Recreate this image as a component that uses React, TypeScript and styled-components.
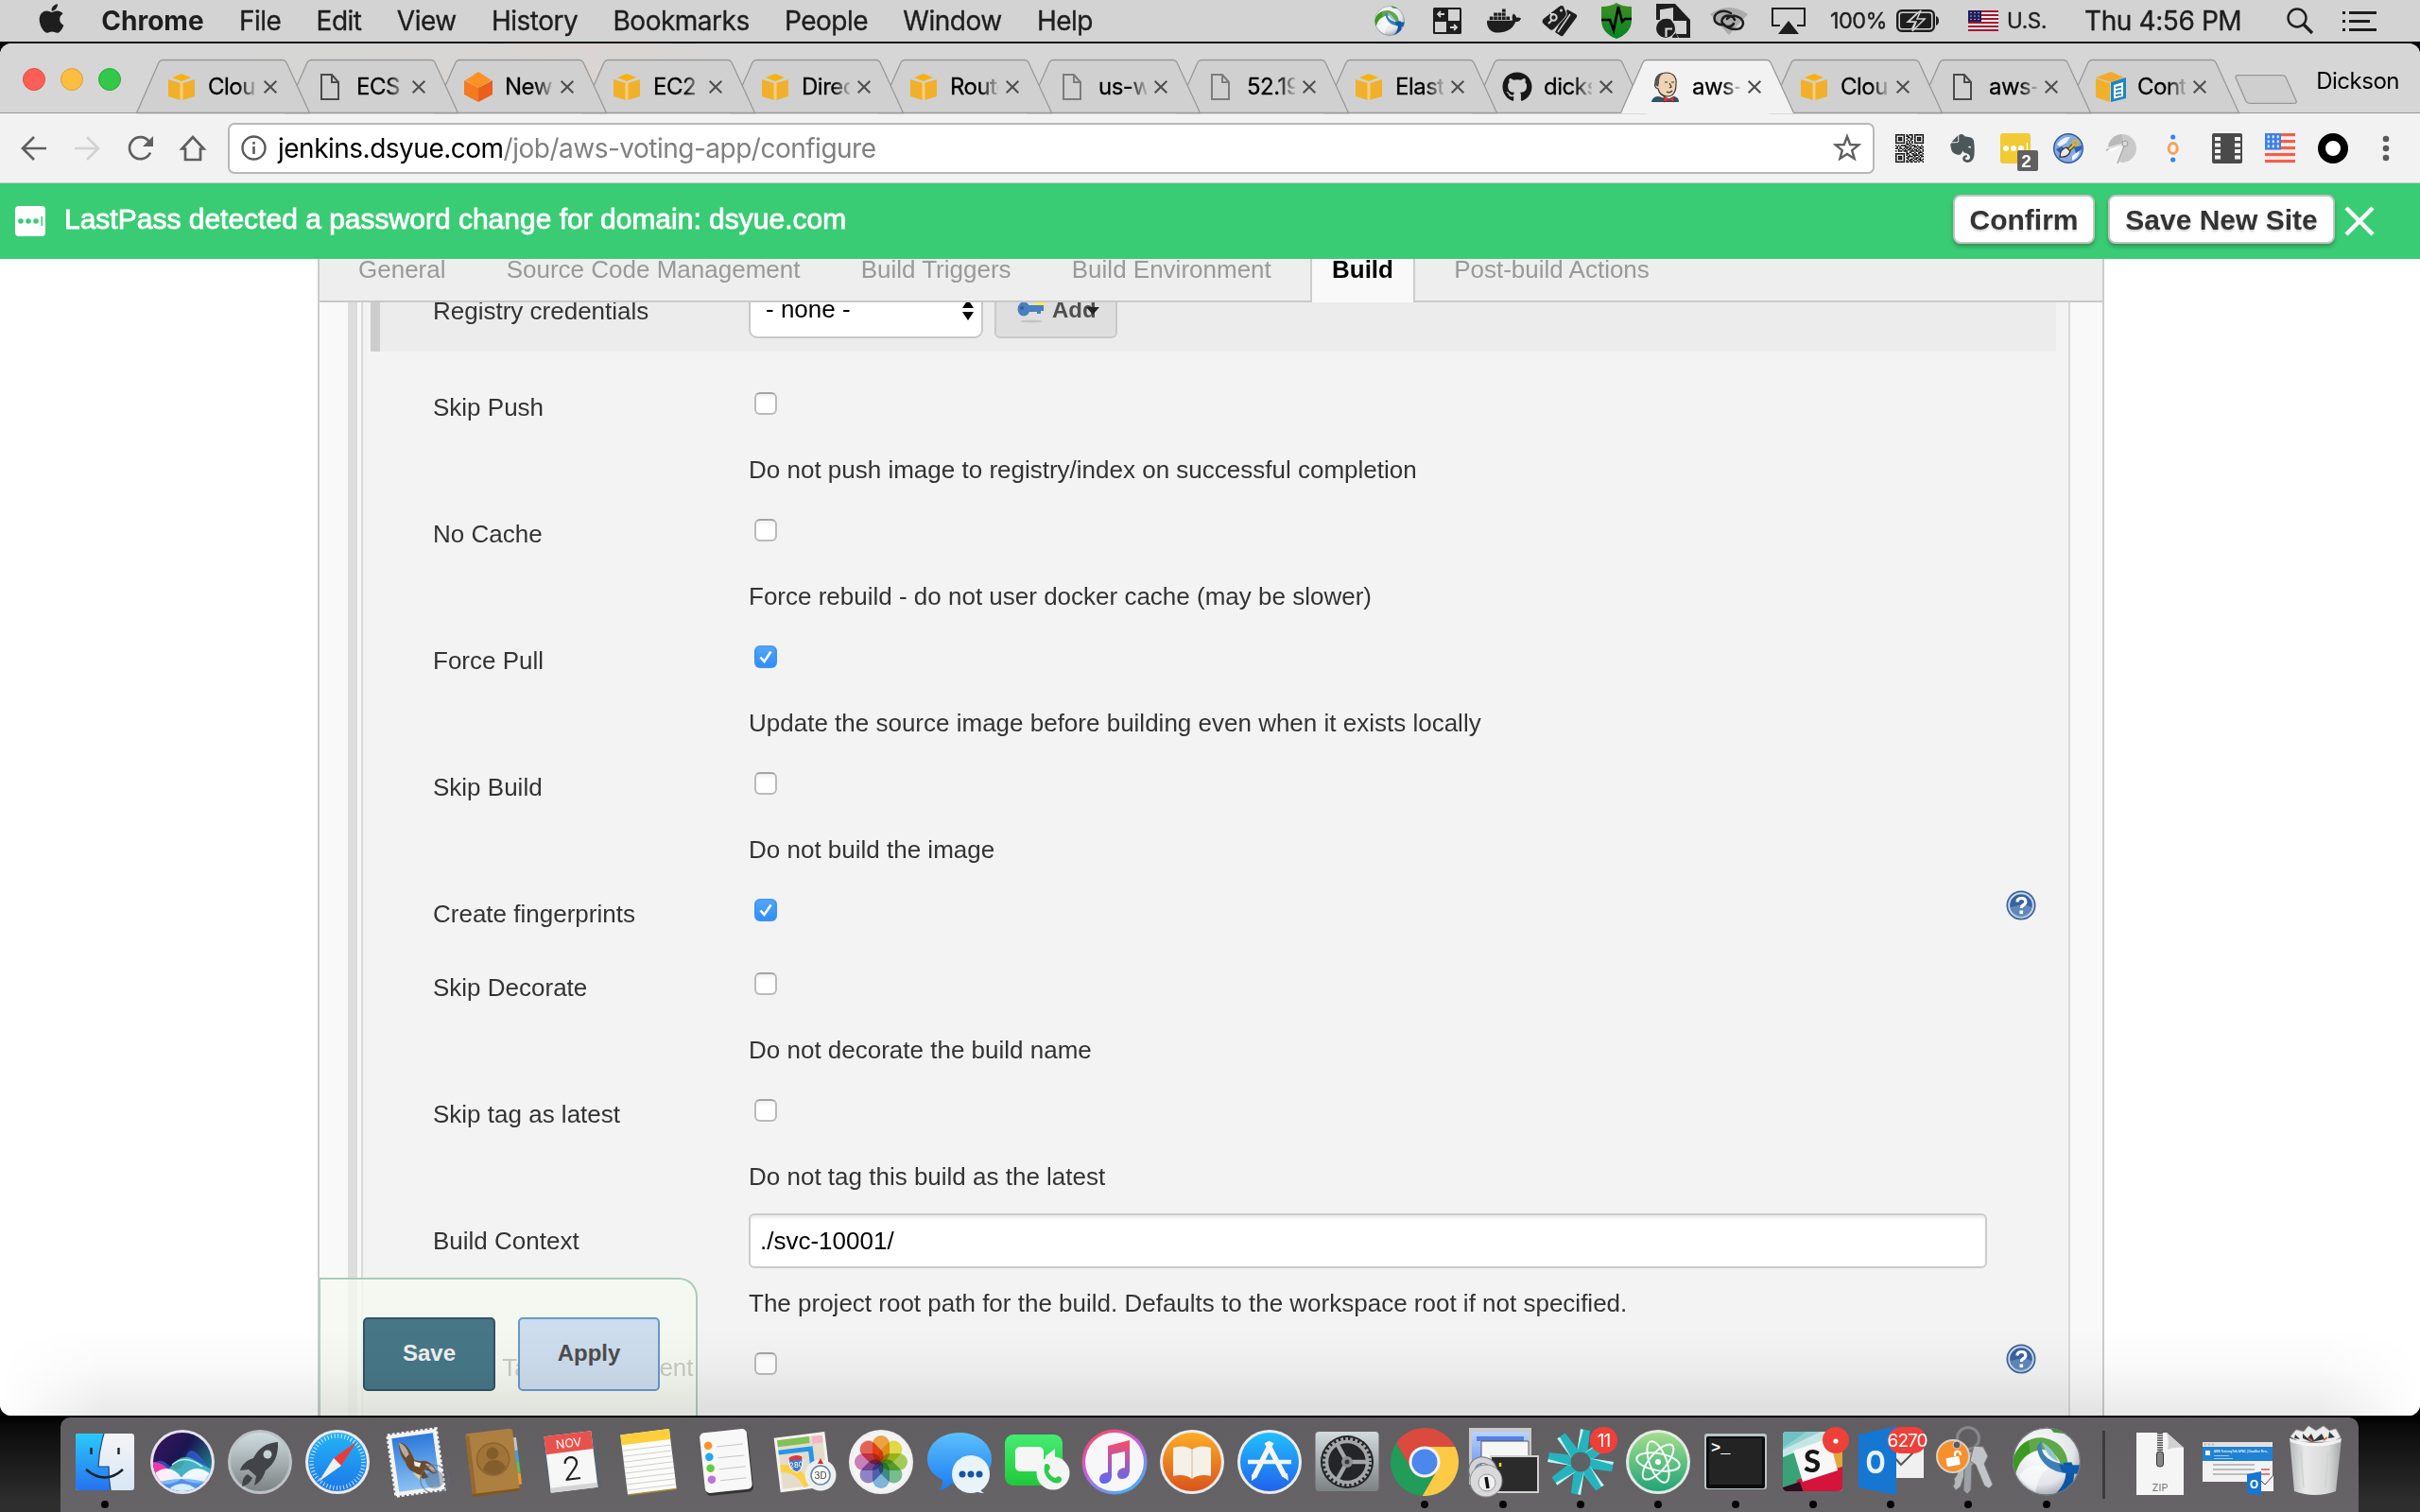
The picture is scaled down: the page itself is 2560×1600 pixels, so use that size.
import React from "react";
import styled, { createGlobalStyle, css } from "styled-components";
import { FaApple, FaDocker, FaGithub, FaEvernote } from "react-icons/fa";

const UI = `Inter, Roboto, "Liberation Sans", sans-serif`;
const WEB = `"Liberation Sans", Arial, sans-serif`;

const Global = createGlobalStyle`
  * { box-sizing: border-box; }
  body { margin: 0; background: #000; }
  svg { display: block; flex: none; overflow: visible; }
`;

const Desktop = styled.div`
  width: 2560px;
  height: 1600px;
  display: flex;
  flex-direction: column;
  overflow: hidden;
  background: #05070b;
  font-family: ${UI};
`;

/* ---------- menu bar ---------- */
const MenuBar = styled.header`
  height: 44px;
  margin-bottom: 2px;
  flex: none;
  display: flex;
  align-items: center;
  justify-content: space-between;
  padding: 0 46px 0 39px;
  background: #d3d3d3;
  color: #1e1e1e;
`;
const MenuGroup = styled.div`
  display: flex;
  align-items: center;
  gap: 37.3px;
`;
const AppleMark = styled.span`
  width: 31px;
  margin-top: -5px;
  display: flex;
  justify-content: center;
`;
const MenuItem = styled.span<{ $bold?: boolean }>`
  font-size: 28px;
  line-height: 44px;
  font-weight: ${(p) => (p.$bold ? 700 : 400)};
  letter-spacing: ${(p) => (p.$bold ? 0 : -0.5)}px;
  -webkit-text-stroke: ${(p) => (p.$bold ? 0 : 0.35)}px #1e1e1e;
  white-space: nowrap;
`;
const StatusGroup = styled.div`
  display: flex;
  align-items: center;
`;
const StatusIcon = styled.span<{ $ml?: number }>`
  margin-left: ${(p) => p.$ml || 0}px;
  display: flex;
`;
const StatusText = styled.span<{ $w: number; $ml: number; $size: number; $ls: number }>`
  width: ${(p) => p.$w}px;
  margin-left: ${(p) => p.$ml}px;
  font-size: ${(p) => p.$size}px;
  letter-spacing: ${(p) => p.$ls}px;
  line-height: 44px;
  white-space: nowrap;
  -webkit-text-stroke: 0.35px #1e1e1e;
`;

/* ---------- browser window ---------- */
const Window = styled.section`
  height: 1452px;
  flex: none;
  display: flex;
  flex-direction: column;
  border-radius: 12px;
  overflow: hidden;
  background: #fff;
  position: relative;
`;
const DockShade = styled.div`
  position: absolute;
  left: 0;
  right: 0;
  bottom: 0;
  height: 90px;
  pointer-events: none;
  z-index: 40;
  background: linear-gradient(rgba(0, 0, 0, 0), rgba(0, 0, 0, 0.025) 45%, rgba(0, 0, 0, 0.085));
  mask-image: linear-gradient(90deg, transparent, #000 110px, #000 2450px, transparent);
`;
const TabStrip = styled.div`
  height: 74px;
  flex: none;
  display: flex;
  align-items: flex-end;
  background: linear-gradient(90deg, #d6d6d6 0, #d7d6d5 500px, #dad5d2 620px, #d6d6d6 780px, #d6d6d6);
  position: relative;
  box-shadow: inset 0 -1px #989898;
`;
const Lights = styled.div`
  width: 144px;
  height: 74px;
  display: flex;
  align-items: center;
  gap: 16px;
  padding: 2px 0 0 24px;
  flex: none;
`;
const Light = styled.i<{ $c: string; $b: string }>`
  width: 24px;
  height: 24px;
  border-radius: 50%;
  background: ${(p) => p.$c};
  border: 1px solid ${(p) => p.$b};
`;
const TabBox = styled.div<{ $z: number }>`
  width: 184px;
  height: 57px;
  margin-right: -27px;
  flex: none;
  position: relative;
  z-index: ${(p) => p.$z};
  display: flex;
  align-items: center;
  padding: 1px 0 0 32px;
`;
const TabShape = styled.svg`
  position: absolute;
  inset: 0;
`;
const TabIcon = styled.span`
  width: 32px;
  height: 32px;
  display: flex;
  align-items: center;
  justify-content: center;
  position: relative;
`;
const TabTitle = styled.span`
  width: 51px;
  margin: 0 8px 0 12px;
  overflow: hidden;
  position: relative;
  white-space: nowrap;
  font-size: 24px;
  letter-spacing: -0.5px;
  line-height: 34px;
  color: #000;
  -webkit-text-stroke: 0.3px #000;
  mask-image: linear-gradient(90deg, #000 32px, transparent 54px);
`;
const Close = styled.svg`
  position: relative;
`;
const NewTab = styled.svg`
  margin: 0 0 10px 22px;
`;
const Profile = styled.span`
  margin: 0 0 19px auto;
  padding-right: 22px;
  font-size: 24px;
  letter-spacing: -0.5px;
  line-height: 30px;
  color: #000;
`;

const Toolbar = styled.div`
  height: 74px;
  flex: none;
  display: flex;
  align-items: center;
  padding-left: 22px;
  background: #f2f2f2;
  border-bottom: 1px solid #c9ccc9;
`;
const NavIcons = styled.div`
  display: flex;
  gap: 28px;
  width: 219px;
`;
const Omnibox = styled.div`
  width: 1742px;
  height: 54px;
  border: 2px solid #b7b7b7;
  border-radius: 7px;
  background: #fff;
  display: flex;
  align-items: center;
  padding: 0 12px 0 12px;
  flex: none;
`;
const Url = styled.div`
  flex: 1;
  margin-left: 12px;
  font-size: 28px;
  letter-spacing: -0.5px;
  line-height: 50px;
  color: #808080;
  b { font-weight: 400; color: #000; }
`;
const Extensions = styled.div`
  margin-left: 21px;
  display: flex;
  align-items: center;
  gap: 24px;
`;

/* ---------- notification banner ---------- */
const Banner = styled.div`
  height: 80px;
  flex: none;
  display: flex;
  align-items: center;
  padding: 0 48px 0 16px;
  background: #3acc74;
  font-family: ${WEB};
`;
const BannerText = styled.span`
  margin-left: 20px;
  flex: 1;
  font-size: 30px;
  line-height: 40px;
  color: #fff;
  padding-bottom: 4px;
  -webkit-text-stroke: 0.8px #fff;
`;
const BannerButton = styled.button<{ $w: number }>`
  width: ${(p) => p.$w}px;
  height: 52px;
  margin: -4px 14px 0 0;
  padding: 2px 0 0;
  border: 2px solid #c4c4c4;
  border-radius: 8px;
  background: #fff;
  box-shadow: 0 3px 4px rgba(0, 0, 0, 0.25);
  font: bold 30px ${WEB};
  color: #333;
  text-shadow: 0 2px 2px rgba(0, 0, 0, 0.18);
`;

/* ---------- configuration page ---------- */
const Page = styled.main`
  flex: 1;
  min-height: 0;
  display: flex;
  justify-content: center;
  font-family: ${WEB};
  font-size: 26px;
  color: #333;
  background: #fff;
`;
const Config = styled.div`
  width: 1890px;
  margin-right: -2px;
  border: solid #ccc;
  border-width: 0 2px;
  background: #f9f9f9;
  display: flex;
  flex-direction: column;
  position: relative;
`;
const ConfigTabs = styled.nav`
  height: 46px;
  flex: none;
  display: flex;
  gap: 18.2px;
  padding-left: 18px;
  background: #eee;
  box-shadow: inset 0 -2px #c9c9c9;
`;
const ConfigTab = styled.a<{ $on?: boolean }>`
  height: 46px;
  padding: 0 21px;
  border: solid transparent;
  border-width: 0 2px;
  line-height: 23px;
  white-space: nowrap;
  color: #999;
  ${(p) =>
    p.$on &&
    css`
      font-weight: bold;
      color: #000;
      background: #f9f9f9;
      border-color: #ccc;
    `}
`;
const Body = styled.div`
  flex: 1;
  min-height: 0;
  overflow: hidden;
  display: flex;
  padding: 0 34px 0 30px;
`;
const DragBar = styled.div`
  width: 10px;
  margin-right: 4px;
  background: #ddd;
`;
const Step = styled.div`
  flex: 1;
  border: solid #d9d9d9;
  border-width: 0 2px;
  background: #f3f3f3;
`;
const Registry = styled.div`
  height: 52px;
  margin: 0 13px 26px 8px;
  border-left: 10px solid #cdcdcd;
  background: #ececec;
  overflow: hidden;
  display: flex;
  align-items: flex-end;
  padding: 0 0 14px 56px;
`;
const RegistryLabel = styled.span`
  width: 334px;
  line-height: 58px;
`;
const Select = styled.div`
  width: 248px;
  height: 62px;
  margin-right: 12px;
  border: 2px solid #c8c8c8;
  border-radius: 9px;
  background: #fff;
  color: #000;
  display: flex;
  align-items: center;
  justify-content: space-between;
  padding: 1px 8px 0 16px;
`;
const AddButton = styled.div`
  width: 130px;
  height: 62px;
  border: 2px solid #c9c9c9;
  border-radius: 6px;
  background: #dfdfdf;
  display: flex;
  align-items: center;
  gap: 8px;
  padding: 2px 0 0 22px;
  font-size: 24px;
  font-weight: bold;
  color: #505050;
  position: relative;
`;
const Caret = styled.svg`
  position: absolute;
  left: 95px;
  top: 27px;
`;
const Field = styled.div<{ $short?: boolean }>`
  height: ${(p) => (p.$short ? 78 : 134)}px;
  padding: 0 34px 0 74px;
  display: grid;
  grid-template-columns: 334px 1fr auto;
  grid-template-rows: 66px 66px;
  align-items: center;
`;
const Description = styled.div`
  grid-column: 2 / 4;
  white-space: nowrap;
`;
const Check = styled.span<{ $on?: boolean }>`
  display: flex;
  width: 24px;
  height: 24px;
  margin: 0 0 8px 6px;
  border-radius: 6px;
  border: 2px solid ${(p) => (p.$on ? "#3b93f0" : "#bababa")};
  border-top-color: ${(p) => (p.$on ? "#4a9cf2" : "#a4a4a4")};
  background: ${(p) => (p.$on ? "linear-gradient(#52a6f8, #2f8ef7)" : "linear-gradient(#f1f1f1, #fff 30%)")};
`;
const TextInput = styled.div`
  width: 1310px;
  height: 58px;
  border: 2px solid #ccc;
  border-radius: 6px;
  background: #fff;
  box-shadow: inset 0 3px 3px rgba(0, 0, 0, 0.07);
  color: #000;
  line-height: 54px;
  padding-left: 10px;
`;
const Help = styled.span`
  padding-bottom: 18px;
  grid-column: 3;
`;
const SaveBar = styled.div`
  position: absolute;
  left: 0;
  bottom: 0;
  width: 400px;
  height: 146px;
  border: solid #a8ccba;
  border-width: 2px 2px 0 1px;
  border-top-right-radius: 20px;
  background: rgba(246, 250, 240, 0.76);
  display: flex;
  gap: 24px;
  padding: 40px 0 0 45px;
`;
const Action = styled.button<{ $primary?: boolean }>`
  width: ${(p) => (p.$primary ? 140 : 150)}px;
  height: 78px;
  padding: 0 0 2px;
  border-radius: 5px;
  border: 2px solid ${(p) => (p.$primary ? "#30546a" : "#6699cc")};
  background: ${(p) => (p.$primary ? "#477787" : "#cddded")};
  color: ${(p) => (p.$primary ? "#f0f0f0" : "#4d4d4d")};
  font: bold 24px ${WEB};
`;

/* ---------- dock ---------- */
const DockArea = styled.footer`
  height: 102px;
  padding: 2px 65px 0 64px;
  background: linear-gradient(#000, #0a0a0b 10%, #2e2e2f 90%);
`;
const Dock = styled.div`
  height: 100px;
  border-radius: 10px 10px 0 0;
  background: linear-gradient(#615e61, #676467);
  display: flex;
  padding-left: 6px;
`;
const DockCell = styled.div`
  width: 82.15px;
  height: 100px;
  flex: none;
`;
const Divider = styled.div`
  width: 3px;
  height: 72px;
  margin: 14px 17px 0 18px;
  background: #3d3b3e;
`;

/* ---------- small glyphs ---------- */
const Box3D = () => (
  <svg width="28" height="28" viewBox="0 0 28 28">
    <path d="M4 4L14 0l10 4-10 4z" fill="#f9b20b" />
    <path d="M0 6l13 4v18L0 24zM28 6l-13 4v18l13-4z" fill="#f1b02b" />
    <path d="M12.5 10h3v17h-3z" fill="#f6cf80" />
  </svg>
);
const Cube = () => (
  <svg width="30" height="32" viewBox="0 0 30 32">
    <path d="M15 0l14 9-14 8L1 9z" fill="#fb9324" />
    <path d="M0 9l15 8v15L0 24z" fill="#f27a21" />
    <path d="M30 9l-15 8v15l15-8z" fill="#ea5f1e" />
  </svg>
);
const Doc = ({ c = "#4b4b4b" }: { c?: string }) => (
  <svg width="20" height="28" viewBox="0 0 20 28" fill="none" stroke={c} strokeWidth="2">
    <path d="M1 1h11l7 8v18H1zM12 1v8h7" />
  </svg>
);
const Butler = () => (
  <svg width="30" height="32" viewBox="0 0 30 32">
    <path d="M0 32c1-5 4-6 8-6l9 3 7-3c4 1 5 3 5 6z" fill="#2f5266" />
    <path d="M4 12C4 4 9 1 16 1s11 5 10 12c0 8-3 13-9 13-6 0-9-4-10-8-3-1-4-3-3-6z" fill="#efd3b4" stroke="#3a3330" strokeWidth="1.2" />
    <path d="M4 14C3 5 8 1 15 1 9 3 8 6 8 12l-1 4z" fill="#555" />
    <path d="M14 11h3M21 11h3M19 12l2 4-2 1M16 21q3 2 6-1" stroke="#3a3330" strokeWidth="1.2" fill="none" />
    <path d="M13 26l6 3 5-3v6l-5-2-6 2z" fill="#d33a3a" stroke="#7d1d1d" strokeWidth=".6" />
  </svg>
);
const BoxPage = () => (
  <svg width="32" height="32" viewBox="0 0 32 32">
    <path d="M0 6L16 0l14 6-14 5z" fill="#f3a92b" />
    <path d="M0 7l15 5v20L0 27z" fill="#f1b02b" />
    <path d="M16 11l16-5v22l-16 4z" fill="#1f85c2" />
    <path d="M19 14l10-3v15l-10 2.500z" fill="#fff" />
    <path d="M21 17l6-1.500M21 21l6-1.300M21 25l6-1" stroke="#1f85c2" strokeWidth="2" />
  </svg>
);
const FlagUS = ({ w, h, soft }: { w: number; h: number; soft?: boolean }) => (
  <svg width={w} height={h} viewBox="0 0 32 22" preserveAspectRatio="none">
    <rect width="32" height="22" fill={soft ? "#fbeeee" : "#f0f0f2"} />
    {[0, 1, 2, 3, 4, 5].map((i) =>
      soft && i > 4 ? null : (
        <rect key={i} y={soft ? i * 4.8 : i * 4} width="32" height={soft ? 2.2 : 2} fill={soft ? "#f0604c" : "#a8142c"} />
      ),
    )}
    <rect width={soft ? 17 : 14} height="12" fill={soft ? "#3f7fe8" : "#1d1d58"} />
    {[2.5, 6, 9.5].map((y) =>
      [3, 7, 11].map((x) => <circle key={x + "-" + y} cx={soft ? x * 1.25 : x} cy={y} r={soft ? 1.2 : 0.7} fill="#dfe6fa" />),
    )}
  </svg>
);
const Sphere = ({ id }: { id: string }) => (
  <g>
    <clipPath id={id}><circle cx="50" cy="50" r="49" /></clipPath>
    <radialGradient id={id + "g"} cx=".4" cy=".35" r=".75">
      <stop offset="0" stopColor="#fff" />
      <stop offset=".65" stopColor="#e2e5e9" />
      <stop offset="1" stopColor="#858c95" />
    </radialGradient>
    <g clipPath={`url(#${id})`}>
      <rect width="100" height="100" fill={`url(#${id}g)`} />
      <path d="M54 0h20l4 10-18-2z" fill="#3f9a2c" />
      <path d="M0 50C8 24 28 13 47 16c22 4 33 20 34 38l-10 2C68 44 58 34 45 33 28 34 12 44 5 68z" fill="#5fa848" />
      <path d="M0 50C6 32 14 24 24 20l2 18C16 42 9 52 5 68z" fill="#3b9a20" />
      <path d="M43 20c-4 22 12 36 57 35v12C62 72 38 54 36 28z" fill="#3f7fb8" />
      <path d="M43 22q16 8 24 28-16-5-24-28z" fill="#8fc4cf" />
      <path d="M74 52c8 14 4 32-14 48h17c14-16 16-36 9-49z" fill="#0d56a6" />
      <path d="M68 54q14 3 32 1v12q-14 2-28-2z" fill="#0f5cae" />
      <path d="M10 70q16-22 44-10-14 4-20 34-16-8-24-24z" fill="#fff" opacity=".55" />
    </g>
    <circle cx="50" cy="50" r="48.500" fill="none" stroke="#70767d" strokeWidth="1.500" />
  </g>
);

const QR_ROWS = [
  "111111101011101111111",
  "100000101100101000001",
  "101110100110101011101",
  "101110101001101011101",
  "101110100101001011101",
  "100000101010101000001",
  "111111101010101111111",
  "000000001101000000000",
  "101011110010111010010",
  "010100011101001101101",
  "110110101011010010110",
  "001001010110101101001",
  "101110111001110110101",
  "000000001011001001110",
  "111111101100110101001",
  "100000101010011110110",
  "101110100111101001011",
  "101110101100010110100",
  "101110100101101101101",
  "100000101011010010110",
  "111111101101101101001",
];
const QR = () => (
  <svg width="32" height="32" viewBox="-.700 -.700 22.400 22.400" shapeRendering="geometricPrecision">
    <rect x="-.7" y="-.7" width="22.4" height="22.4" fill="#fff" />
    {QR_ROWS.map((r, y) => r.split("").map((c, x) => (c === "1" ? <rect key={x + "." + y} x={x} y={y} width="1.080" height="1.080" fill="#000" /> : null)))}
  </svg>
);
const PassExt = () => (
  <svg width="32" height="32" viewBox="0 0 32 32">
    <rect width="32" height="32" rx="3" fill="#f2ca33" />
    <circle cx="6" cy="16" r="3" fill="#fff" /><circle cx="14" cy="16" r="3" fill="#fff" /><circle cx="22" cy="16" r="3" fill="#fff" />
    <path d="M28.500 10v10" stroke="#fff" strokeWidth="1.300" />
    <rect x="18" y="18" width="22" height="22" rx="2" fill="#606060" />
    <text x="27.500" y="36" textAnchor="middle" fontFamily="Liberation Sans, sans-serif" fontWeight="700" fontSize="19" fill="#fff">2</text>
  </svg>
);
const Digger = () => (
  <svg width="32" height="32" viewBox="0 0 32 32">
    <circle cx="16" cy="16" r="15.300" fill="#86a9df" stroke="#2c58a8" strokeWidth="1.400" />
    <path d="M4 12q6-9 14-8l-4 6-7 4zM20 24l8-6q-1 8-8 11z" fill="#eef4fd" />
    <path d="M3 17l6-3 3 2-5 5z" fill="#2f5fb4" /><path d="M22 15l8-2v4l-6 4z" fill="#2f5fb4" />
    <path d="M15 19l8-8" stroke="#4d3f0a" strokeWidth="4.500" /><path d="M15 19l8-8" stroke="#e8c638" strokeWidth="2.200" />
    <circle cx="23.500" cy="10" r="2.800" fill="none" stroke="#d9b52a" strokeWidth="2" />
    <path d="M7 25q0-8 7-10l4 4q-2 7-11 6z" fill="#e9e9e9" stroke="#333" strokeWidth="1.300" />
  </svg>
);
const Dish = () => (
  <svg width="32" height="32" viewBox="0 0 32 32">
    <path d="M2 15A15 15 0 0 1 17 1l2 9z" fill="#bababa" />
    <path d="M17 1a15 15 0 0 1 0 30l-3-1 6-18z" fill="#c9c9c9" />
    <path d="M0 18l20-7-8 21" fill="none" stroke="#a9a9a9" strokeWidth="1.500" />
    <path d="M2 17l17-6-14 9z" fill="#fff" />
    <circle cx="20" cy="11" r="3" fill="#d8d8d8" stroke="#999" />
  </svg>
);
const Dots3 = () => (
  <svg width="32" height="32" viewBox="0 0 32 32">
    <circle cx="14.700" cy="4" r="2.600" fill="#2f86f6" /><circle cx="14.700" cy="28" r="2.600" fill="#2f86f6" />
    <ellipse cx="14.700" cy="16" rx="4.500" ry="5.500" fill="none" stroke="#f5a15c" strokeWidth="3" />
  </svg>
);
const Film = () => (
  <svg width="32" height="32" viewBox="0 0 32 32">
    <rect width="32" height="32" rx="2" fill="#4a4a4a" />
    {[4, 10.5, 17, 23.5].map((y) => (
      <g key={y} fill="#f4f4f4"><rect x="3" y={y} width="6" height="4" /><rect x="24" y={y} width="6" height="4" /></g>
    ))}
  </svg>
);
const HelpIcon = () => (
  <svg width="32" height="32" viewBox="0 0 32 32">
    <circle cx="16" cy="16" r="15.500" fill="#3a62a0" />
    <circle cx="16" cy="16" r="12.800" fill="#38639f" stroke="#ccd9e8" strokeWidth="2" />
    <path d="M5 18a11 11 0 0 0 22 0q-8-5-22 0z" fill="#7fa6d2" opacity=".55" />
    <path d="M11.800 12.500q.5-4 4.700-4 4.300 0 4.300 3.700 0 2.300-2.800 3.800-1.700 1-1.700 3" fill="none" stroke="#fff" strokeWidth="3.200" />
    <rect x="14.500" y="21.500" width="3.600" height="3.600" fill="#fff" />
  </svg>
);

/* ---------- dock drawings, one 82×100 tile each ---------- */
const Disc = ({ fill, rim = "#ececee" }: { fill: string; rim?: string }) => (
  <>
    <circle cx="41" cy="47" r="34" fill={rim} />
    <circle cx="41" cy="47" r="31" fill={fill} />
  </>
);
const Grad = ({ id, a, b }: { id: string; a: string; b: string }) => (
  <linearGradient id={id} x1="0" y1="0" x2="0" y2="1"><stop offset="0" stopColor={a} /><stop offset="1" stopColor={b} /></linearGradient>
);
const BadgeRed = ({ x, w, t }: { x: number; w: number; t: string }) => (
  <>
    <rect x={x} y="10" width={w} height="28" rx="14" fill="#ee4038" />
    {t === "•" ? (
      <circle cx={x + w / 2} cy="25" r="2.600" fill="#fff" />
    ) : (
      <text x={x + w / 2} y="31" textAnchor="middle" fontSize="19" fontFamily="Inter, sans-serif" fill="#fff" letterSpacing="-1">{t}</text>
    )}
  </>
);

const ART: Record<string, React.ReactNode> = {
  finder: (
    <>
      <Grad id="fa" a="#2bc9fb" b="#2672ee" /><Grad id="fb" a="#f4f4f5" b="#d9e6f6" />
      <rect x="10" y="17" width="62" height="60" rx="3" fill="url(#fb)" />
      <path d="M13 17h27q-5 16-6 35h11q0 13 2 25H13q-3 0-3-3V20q0-3 3-3z" fill="url(#fa)" />
      <path d="M40 17q-5 16-6 35h11q0 13 2 25" fill="none" stroke="#1d4a74" strokeWidth="1.200" />
      <path d="M26.500 32v7M55.500 32v7" stroke="#16222e" strokeWidth="2.400" />
      <path d="M21 55q20 17 39 0" fill="none" stroke="#16222e" strokeWidth="2.400" />
    </>
  ),
  siri: (
    <>
      <linearGradient id="si" x1="0" y1="0" x2="1" y2=".7"><stop offset="0" stopColor="#3a1560" /><stop offset=".5" stopColor="#1c1550" /><stop offset="1" stopColor="#1f8a90" /></linearGradient>
      <Disc fill="url(#si)" rim="#e6e2ee" />
      <clipPath id="sic"><circle cx="41" cy="47" r="31" /></clipPath>
      <g clipPath="url(#sic)">
        <path d="M4 60q8-22 22-10t18-6 18 0 14 14v30H4z" fill="#2f5ed8" opacity=".75" />
        <path d="M8 47q16 0 24 17-12 8-24 2z" fill="#ee3aa6" />
        <path d="M26 56q12-20 26-12t22 12q-10 10-24 8t-24-8z" fill="#52d8c8" opacity=".7" />
        <path d="M30 50q14-12 32 2" stroke="#b6f4f6" strokeWidth="1.500" fill="none" />
        <path d="M8 63q16-18 32 0 16-18 34 0-14 12-34 2-18 12-32-2z" fill="#fff" opacity=".92" />
        <path d="M10 70q31-10 62 0v12H10z" fill="#5aa6f8" opacity=".75" />
        <path d="M26 76q15-12 30 0-14 6-30 0z" fill="#d6ecff" />
      </g>
    </>
  ),
  rocket: (
    <>
      <Grad id="ro" a="#cfdde1" b="#7e8384" />
      <Disc fill="url(#ro)" rim="#bcc3c6" />
      <path d="M60 26q-18 1-26 17l-5 2q-7 4-9 11l9-1 8 7-2 10q7-4 10-11l2-5q14-10 13-30z" fill="#414549" />
      <circle cx="49" cy="39" r="4.500" fill="#c9d3d6" /><path d="M28 60q-6 3-6 13 8-2 11-9z" fill="#414549" />
    </>
  ),
  safari: (
    <>
      <Grad id="sa" a="#22b4f5" b="#1e77ea" />
      <Disc fill="url(#sa)" />
      <circle cx="41" cy="47" r="27.500" fill="none" stroke="#cfeafe" strokeWidth="4.500" strokeDasharray="1 2.600" />
      <path d="M61 26L45 51l-8-8z" fill="#ee3a36" /><path d="M21 68l16-25 8 8z" fill="#f1f1f3" />
    </>
  ),
  mail: (
    <g transform="rotate(-8 41 47)">
      <Grad id="ml" a="#2d79dc" b="#8cc2f0" />
      <rect x="15" y="15" width="52" height="65" fill="#f4f4f4" stroke="#f4f4f4" strokeWidth="3" strokeDasharray="3 2" />
      <rect x="19" y="19" width="44" height="57" fill="url(#ml)" />
      <path d="M26 24q8 2 11 12l3 9 6 2q10-2 16 14l-5 1q-6-6-9-5l4 8-6 1-7-8q-8-3-9-12-6-10-4-22z" fill="#6b4a2b" />
      <path d="M26 24q7 4 9 14l-4 3q-5-8-5-17zM50 50q8 1 11 11l-4-1q-4-6-7-10z" fill="#b9aa97" /><path d="M39 46l7 3-2 4-5-2z" fill="#f0ece2" /><path d="M36 58l6 8 3-4z" fill="#e2cf9c" />
      <circle cx="58" cy="68" r="15" fill="none" stroke="#5f6d80" strokeWidth="1.500" opacity=".6" /><circle cx="58" cy="68" r="10" fill="#4f6078" opacity=".4" />
    </g>
  ),
  contacts: (
    <g transform="rotate(-7 41 47)">
      <path d="M64 24h4v14h-4z" fill="#c4c4c6" /><path d="M64 38h4v12h-4z" fill="#3ba3e0" /><path d="M64 50h4v12h-4z" fill="#5ac052" /><path d="M64 62h4v12h-4z" fill="#f29a2a" />
      <rect x="15" y="14" width="50" height="66" rx="3" fill="#ad7f40" /><path d="M15 16h4v63h-4z" fill="#96692f" />
      <circle cx="41" cy="44" r="17" fill="#a27438" stroke="#8a6430" strokeWidth="1.500" /><circle cx="41" cy="38" r="6.500" fill="#835d2b" /><path d="M29 54q3-9 12-9t12 9q-5 6-12 6t-12-6z" fill="#835d2b" />
      <path d="M15 78h50v3H15z" fill="#80571f" />
    </g>
  ),
  calendar: (
    <g transform="rotate(-7 41 47)">
      <path d="M14 22h56v54H14z" fill="#59646c" />
      <rect x="16" y="17" width="50" height="60" fill="#f7f7f7" /><rect x="16" y="17" width="50" height="19" fill="#e8524d" />
      <text x="41" y="31.500" textAnchor="middle" fontSize="12.500" fontFamily="Inter, sans-serif" fill="#fff">NOV</text>
      <text x="41" y="66" textAnchor="middle" fontSize="34" fontWeight="300" fontFamily="Inter, sans-serif" fill="#222">2</text>
      <path d="M16 72h50v5H16z" fill="#d4d4d4" />
    </g>
  ),
  notes: (
    <g transform="rotate(-7 41 47)">
      <rect x="15" y="15" width="52" height="64" fill="#fcfcfa" /><rect x="15" y="15" width="52" height="11" fill="#fdcf3b" />
      {[32, 38, 44, 50, 56, 62, 68, 74].map((y) => <path key={y} d={`M15 ${y}h52`} stroke="#cfcfcd" />)}
      <path d="M15 79h52" stroke="#a88a2c" strokeWidth="1.500" />
    </g>
  ),
  reminders: (
    <g transform="rotate(-6 41 47)">
      <rect x="17" y="17" width="50" height="64" rx="5" fill="#333" /><rect x="16" y="14" width="50" height="64" rx="5" fill="#f8f8f8" />
      {["#ff9227", "#23a6f5", "#60ce3c", "#c071e0"].map((c, i) => (
        <g key={c}><circle cx="24" cy={28 + i * 12} r="4.300" fill={c} /><path d={`M33 ${30 + i * 12}h28`} stroke="#c6c6c6" /></g>
      ))}
    </g>
  ),
  maps: (
    <>
      <g transform="rotate(-7 41 47)">
        <rect x="13" y="18" width="54" height="58" fill="#f5f3ee" /><rect x="16" y="21" width="48" height="52" fill="#e5dccb" />
        <path d="M16 21h34v7H16z" fill="#7fc257" /><path d="M53 21h11v8H53z" fill="#f0b6c3" />
        <path d="M16 34h34v39" fill="none" stroke="#2496ea" strokeWidth="5" /><path d="M16 51q20 2 26 22" fill="none" stroke="#fbd148" strokeWidth="8" />
        <path d="M26 41q6-4 14 0 2 12-7 16-9-4-7-16z" fill="#3d79cf" stroke="#fff" /><path d="M26 41q6-4 14 0v3H26z" fill="#dc3a3c" />
        <text x="33" y="52" textAnchor="middle" fontSize="8" fontFamily="Inter, sans-serif" fill="#fff">280</text>
      </g>
      <circle cx="59" cy="61" r="16.500" fill="#eceff0" /><circle cx="59" cy="61" r="10" fill="#f8f8f8" stroke="#5a87a4" strokeWidth="1.500" />
      <path d="M56 49l3-6 3 6z" fill="#e02a22" /><text x="59" y="64.500" textAnchor="middle" fontSize="10" fontFamily="Inter, sans-serif" fill="#444">3D</text>
    </>
  ),
  photos: (
    <>
      <Disc fill="#f4f4f4" rim="#f0f0f0" />
      {["#f8a130", "#e9de38", "#a5cf4a", "#6dc08b", "#7ab4e4", "#8a7cc4", "#cf78b8", "#ee5548"].map((c, i) => (
        <rect key={c} x="32" y="19" width="18" height="28" rx="9" fill={c} opacity=".9" transform={`rotate(${i * 45} 41 47)`} style={{ mixBlendMode: "multiply" }} />
      ))}
    </>
  ),
  messages: (
    <>
      <Grad id="me" a="#5cc0fb" b="#1b7cf3" />
      <path d="M41 16c19 0 34 12 34 28S60 71 41 71q-5 0-9-1-5 6-13 7 5-5 4-11C13 61 7 54 7 44c0-16 15-28 34-28z" fill="url(#me)" />
      <circle cx="53" cy="60" r="20" fill="#e9f3fc" /><path d="M62 75q2 4 5 5-7 0-11-4z" fill="#e9f3fc" />
      {[44, 53, 62].map((x) => <circle key={x} cx={x} cy="60" r="3.500" fill="#1655a0" />)}
    </>
  ),
  facetime: (
    <>
      <Grad id="ft" a="#46ec72" b="#1fc93a" />
      <rect x="7" y="18" width="61" height="54" rx="9" fill="url(#ft)" />
      <rect x="18" y="31" width="30" height="26" rx="5" fill="#f4f7f5" /><path d="M50 41l10-8v22l-10-8z" fill="#f4f7f5" />
      <circle cx="58" cy="59" r="17.500" fill="#f2f5f3" />
      <path d="M49 50q4-3 6 3l-2 4q2 5 7 7l4-2q5 2 2 6-5 4-12-2-7-6-5-16z" fill="#2fca4b" />
    </>
  ),
  itunes: (
    <>
      <linearGradient id="itr" x1=".2" y1="0" x2=".8" y2="1"><stop offset="0" stopColor="#fb4a5c" /><stop offset=".45" stopColor="#c35fe8" /><stop offset="1" stopColor="#35b9f8" /></linearGradient>
      <Grad id="itn" a="#fb4d68" b="#5a68f8" />
      <circle cx="41" cy="47" r="34.500" fill="url(#itr)" /><circle cx="41" cy="47" r="31" fill="#f7f7fa" />
      <path d="M34 30l23-6v33q-1 8-8 8-5 0-5-5 0-6 8-7V36l-14 3v24q-1 7-8 7-5 0-5-5 0-6 9-7z" fill="url(#itn)" />
    </>
  ),
  ibooks: (
    <>
      <Grad id="ib" a="#fcac28" b="#d9541c" />
      <Disc fill="url(#ib)" />
      <path d="M41 34q-8-6-20-2v30q12-3 20 3 8-6 20-3V32q-12-4-20 2z" fill="#f6f1e8" /><path d="M41 34v31" stroke="#c9b9a4" />
    </>
  ),
  appstore: (
    <>
      <Grad id="as" a="#22bffb" b="#2062ec" />
      <Disc fill="url(#as)" />
      <path d="M18 47h46" stroke="#eef5fc" strokeWidth="4.500" /><path d="M43 26L25 62M38 26l19 36" stroke="#f6f6f6" strokeWidth="5.500" />
      <path d="M22 60l6 3-6 4zM60 59l-6 3 7 5z" fill="#f6f6f6" />
    </>
  ),
  prefs: (
    <>
      <Grad id="pr" a="#d2dbdf" b="#7d8283" />
      <rect x="7.500" y="15" width="67" height="63" rx="4" fill="url(#pr)" /><circle cx="41" cy="47" r="28" fill="#232527" />
      <circle cx="41" cy="47" r="21.500" fill="none" stroke="#a4a7a9" strokeWidth="3.500" /><circle cx="41" cy="47" r="24" fill="none" stroke="#a4a7a9" strokeWidth="4" strokeDasharray="2.800 2.230" />
      <path d="M41 47h20M41 47l-10-18M41 47l-10 18" stroke="#a4a7a9" strokeWidth="4.500" /><circle cx="41" cy="47" r="6" fill="#8a8e90" /><circle cx="41" cy="47" r="2.500" fill="#35383a" />
    </>
  ),
  chrome: (
    <g transform="translate(41 47)">
      <path d="M0-16H32.250A36 36 0 0 0-30-19.900L-13.900 8z" fill="#da4a3e" />
      <path d="M0-16H32.250A36 36 0 0 0-30-19.900L-13.900 8z" fill="#219c59" transform="rotate(-120)" />
      <path d="M0-16H32.250A36 36 0 0 0-30-19.900L-13.900 8z" fill="#fcca45" transform="rotate(120)" />
      <circle r="16.500" fill="#f4f4f4" /><circle r="13.500" fill="#4b87ec" />
    </g>
  ),
  vnc: (
    <>
      <Grad id="vn" a="#b9d4ff" b="#5280ea" />
      <rect x="5" y="11" width="66" height="60" fill="#c9c9c9" /><rect x="8" y="15" width="60" height="52" fill="url(#vn)" />
      <rect x="13" y="20" width="50" height="5" fill="#567fe6" /><path d="M18 25h50v42H18z" fill="#f6f6f6" stroke="#555" />
      <rect x="28" y="41" width="50" height="38" fill="#2b2b2b" stroke="#d0d0d0" strokeWidth="2" /><path d="M38 48v4" stroke="#e8e02e" strokeWidth="2.500" />
      <path d="M10 65l-2-8q0-10 10-12 10 0 13 9l1 6" fill="none" stroke="#77797b" strokeWidth="7.500" />
      <path d="M10 65l-2-8q0-10 10-12 10 0 13 9l1 6" fill="none" stroke="#d3d3d5" strokeWidth="5.500" />
      <circle cx="23" cy="67" r="17" fill="#d9d9db" stroke="#8b8b8d" />
      <circle cx="24" cy="69" r="9" fill="#efefef" stroke="#999" /><path d="M23 63l2 12" stroke="#111" strokeWidth="3.500" fill="none" />
    </>
  ),
  crystal: (
    <>
      <g transform="translate(41 47)">
        {[0, 45, 90, 135, 180, 225, 270, 315].map((a) => (
          <g key={a} transform={`rotate(${a})`}><path d="M-4-9L0-35l10 2L7-8z" fill="#25b4bd" /><path d="M-4-9L0-35l3 1z" fill="#c7f2f2" /></g>
        ))}
        <circle r="10.500" fill="#5d6266" />
      </g>
      <BadgeRed x={51} w={29} t="11" />
    </>
  ),
  atom: (
    <>
      <Grad id="at" a="#a4dd8c" b="#21a478" />
      <circle cx="41" cy="47" r="34" fill="#e3ebe6" /><circle cx="41" cy="47" r="31" fill="url(#at)" />
      {[10, 70, 130].map((a) => <ellipse key={a} cx="41" cy="47" rx="23" ry="9" fill="none" stroke="#f4fff8" strokeWidth="2" transform={`rotate(${a} 41 47)`} />)}
      <circle cx="41" cy="47" r="3" fill="#fff" />
    </>
  ),
  terminal: (
    <>
      <rect x="8" y="17" width="66" height="59" rx="3" fill="#b9c5c8" /><rect x="10" y="20" width="62" height="55" rx="2" fill="#0c0c0c" /><rect x="13" y="22" width="56" height="49" fill="#232323" />
      <text x="15" y="37" fontSize="17" fontWeight="700" fontFamily="Liberation Mono, monospace" fill="#fff">&gt;_</text>
    </>
  ),
  slack: (
    <>
      <clipPath id="sl"><rect x="9" y="15" width="63" height="63" rx="4" /></clipPath>
      <g clipPath="url(#sl)">
        <rect width="82" height="100" fill="#f4f4f4" /><path d="M9 15h40L9 34z" fill="#6ec3c2" /><path d="M34 15h22L60 35 9 52V32z" fill="#a6dcda" opacity=".6" />
        <path d="M58 15h20v40l-14 4-8-36z" fill="#e3a63a" /><path d="M9 42l15-6 9 38-24 6z" fill="#38a377" /><path d="M24 66l48-14v28H9l14-6z" fill="#d5143c" /><path d="M9 74l18-6 4 12H9z" fill="#2b0d1e" />
        <path d="M20 35l38-13 9 34-37 12z" fill="#f7f7f7" />
      </g>
      <text x="40" y="58" textAnchor="middle" fontSize="33" fontWeight="900" fontFamily="Lato, sans-serif" fill="#161616">S</text>
      <BadgeRed x={51} w={28} t="•" />
    </>
  ),
  outlook: (
    <>
      <rect x="34" y="22" width="42" height="42" fill="#f0f0f0" /><path d="M34 30l18 20 24-24" fill="none" stroke="#555" strokeWidth="2" />
      <path d="M7 18l40-9v73L7 74z" fill="#1677d2" /><text x="25" y="59" textAnchor="middle" fontSize="34" fontWeight="700" fontFamily="Open Sans, sans-serif" fill="#e8f2fb" transform="translate(5 0) scale(.8 1)">O</text>
      <BadgeRed x={38} w={41} t="6270" />
    </>
  ),
  keys: (
    <>
      <circle cx="41" cy="22" r="11.500" fill="none" stroke="#85878a" strokeWidth="3" />
      <path d="M34 46l7 3-8 24-5 4-3-4 2-4-1-4 3-4z" fill="#b4b8bb" stroke="#707478" />
      <path d="M36 36l12 0 2 10-5 5-1 26-4 4-4-4 1-24-5-6z" fill="#9da1a5" stroke="#6b6e72" />
      <path d="M47 30l10 1 5 10-4 8 9 22-4 4-5-3-9-22-6-4z" fill="#c1c5c8" stroke="#74787c" />
      <circle cx="25" cy="41" r="17" fill="#f6902d" stroke="#ddd0c0" strokeWidth="2" /><circle cx="29" cy="29" r="4" fill="#5d5a5d" stroke="#d0d0d0" />
      <rect x="18" y="42" width="14" height="9" rx="1" fill="#fff" transform="rotate(-10 25 46)" /><path d="M27 41v-3q1-3 4-2 2 1 2 4" fill="none" stroke="#fff" strokeWidth="2.300" />
    </>
  ),
  anyconnect: <g transform="translate(4.500 10) scale(.73)"><Sphere id="dockSphere" /></g>,
  zip: (
    <>
      <path d="M16 16h32l18 16v50H16z" fill="#f5f5f5" /><path d="M48 16l18 16q-12-1-17 2 2-9-1-18z" fill="#d1d1d3" />
      <path d="M41 16v24" stroke="#555" strokeWidth="6" strokeDasharray="1.500 1" /><rect x="37.500" y="36" width="7" height="16" rx="3" fill="#888" stroke="#333" />
      <text x="41" y="78" textAnchor="middle" fontSize="11" fontFamily="Inter, sans-serif" fill="#777">ZIP</text>
    </>
  ),
  miniWindow: (
    <>
      <rect x="4" y="26" width="74" height="42" fill="#f2f2f2" /><rect x="4" y="26" width="74" height="5" fill="#e2e2e2" />
      <circle cx="7" cy="28.500" r="1.200" fill="#bbb" /><circle cx="11" cy="28.500" r="1.200" fill="#bbb" /><circle cx="15" cy="28.500" r="1.200" fill="#bbb" />
      <rect x="4" y="31" width="74" height="15" fill="#1f82d2" /><rect x="7" y="35" width="5" height="5" fill="#fff" />
      <text x="16" y="37" fontSize="4" fontWeight="700" fontFamily="Liberation Sans, sans-serif" fill="#e8f3fd" textLength="58" lengthAdjust="spacingAndGlyphs">AWS TrainingTalk APAC | Deadline Ren...</text>
      <path d="M16 40.500h16M16 43.500h20" stroke="#9cc9ee" />
      {[50, 55, 60].map((y) => <path key={y} d={`M15 ${y}h44`} stroke="#aaa" strokeWidth="1.500" />)}
      <path d="M66 55h9M66 60h9" stroke="#d0565c" strokeWidth="1.500" />
      <rect x="60" y="62" width="19" height="16" fill="#f4f4f4" /><path d="M64 65l6 6 8-9" stroke="#444" fill="none" /><path d="M51 60l15-3v26l-15-3z" fill="#1677d2" /><text x="58.500" y="75" textAnchor="middle" fontSize="12" fontWeight="700" fontFamily="Open Sans, sans-serif" fill="#fff">O</text>
    </>
  ),
  trash: (
    <>
      <linearGradient id="tr"><stop offset="0" stopColor="#b9bcbd" /><stop offset=".3" stopColor="#efefef" /><stop offset=".75" stopColor="#dcdcdc" /><stop offset="1" stopColor="#a7a9aa" /></linearGradient>
      <path d="M15 20l6-7 8 2 5-6 8 5 8-5 6 5 7-2 5 9-8 5H24z" fill="#ececec" stroke="#aaa" /><path d="M28 17l5 5 4-5 3 7 8-7 3 6-14 3-9-4zM20 18l5 5-6-1zM56 15l6 6-7 1z" fill="#34393c" /><path d="M34 22l4 3M50 24l4-3" stroke="#cf6a4e" strokeWidth="2" />
      <path d="M14 22q27 10 55 0l-6 56q-22 8-44 0z" fill="url(#tr)" opacity=".96" /><path d="M14 22q27 10 55 0l-1 4q-27 9-53 0z" fill="#fafafa" opacity=".8" />
      <path d="M26 36l3 38M55 36l-3 38" stroke="#d0d2d2" strokeWidth="1.500" />
    </>
  ),
};

const DockTile = ({ name, running }: { name: string; running?: boolean }) => (
  <DockCell>
    <svg width="82" height="100" viewBox="0 0 82 100">
      {ART[name]}
      {running && <circle cx="41" cy="92" r="4" fill="#000" />}
    </svg>
  </DockCell>
);

const DOCK: [string, boolean][] = [
  ["finder", true], ["siri", false], ["rocket", false], ["safari", false], ["mail", false], ["contacts", false], ["calendar", false], ["notes", false], ["reminders", false], ["maps", false], ["photos", false], ["messages", false], ["facetime", false], ["itunes", false], ["ibooks", false], ["appstore", false], ["prefs", false], ["chrome", true], ["vnc", true], ["crystal", true], ["atom", true], ["terminal", true], ["slack", true], ["outlook", true], ["keys", true], ["anyconnect", true],
];

const TABS: [string, React.ReactNode][] = [
  ["Cloud", <Box3D />], ["ECS", <Doc />], ["New", <Cube />], ["EC2", <Box3D />], ["Direct", <Box3D />], ["Route", <Box3D />], ["us-w", <Doc c="#7d7d7d" />], ["52.19", <Doc c="#7d7d7d" />], ["Elast", <Box3D />], ["dicks", <FaGithub size={32} color="#181616" />], ["aws-", <Butler />], ["Cloud", <Box3D />], ["aws-", <Doc />], ["Cont", <BoxPage />],
];

const Tab = ({ title, icon, index }: { title: string; icon: React.ReactNode; index: number }) => {
  const on = index === 10;
  return (
    <TabBox $z={on ? 30 : 20 - index}>
      <TabShape width="184" height="57" viewBox="0 0 184 57">
        <path d="M.5 57L24 3q1.500-2.500 4-2.500h127q2.500 0 4 2.500l24.500 54z" fill={on ? "#f2f2f2" : "#d0d0d0"} />
        <path d={`M.5 56.500L24 3q1.500-2.500 4-2.500h127q2.500 0 4 2.500l24.500 53.500${on ? "" : "H.5"}`} fill="none" stroke="#989898" strokeWidth="1.300" />
      </TabShape>
      <TabIcon>{icon}</TabIcon>
      <TabTitle>{title}</TabTitle>
      <Close width="14" height="14" viewBox="0 0 14 14"><path d="M.7.700l12.600 12.600M13.300.700L.7 13.300" stroke="#505050" strokeWidth="2.200" /></Close>
    </TabBox>
  );
};

type FieldSpec = { label: string; checked?: boolean; text?: string; help?: boolean; input?: string; short?: boolean };
const FIELDS: FieldSpec[] = [
  { label: "Skip Push", text: "Do not push image to registry/index on successful completion" },
  { label: "No Cache", text: "Force rebuild - do not user docker cache (may be slower)" },
  { label: "Force Pull", checked: true, text: "Update the source image before building even when it exists locally" },
  { label: "Skip Build", text: "Do not build the image" },
  { label: "Create fingerprints", checked: true, help: true, short: true },
  { label: "Skip Decorate", text: "Do not decorate the build name" },
  { label: "Skip tag as latest", text: "Do not tag this build as the latest" },
  { label: "Build Context", input: "./svc-10001/", text: "The project root path for the build. Defaults to the workspace root if not specified." },
  { label: "Force Tag Replacement", help: true, short: true },
];

const dark = "#1e1e1e";

export default function App() {
  return (
    <Desktop>
      <Global />
      <MenuBar>
        <MenuGroup>
          <AppleMark><FaApple size={35} color={dark} /></AppleMark>
          <MenuItem $bold>Chrome</MenuItem>
          {["File", "Edit", "View", "History", "Bookmarks", "People", "Window", "Help"].map((m) => <MenuItem key={m}>{m}</MenuItem>)}
        </MenuGroup>
        <StatusGroup>
          <StatusIcon><svg width="32" height="32" viewBox="0 0 100 100"><Sphere id="menuSphere" /></svg></StatusIcon>
          <StatusIcon $ml={30}>
            <svg width="30" height="28" viewBox="0 0 30 28">
              <rect width="30" height="28" rx="1.500" fill={dark} /><path d="M16 2h12v12H16zM2 15h12v11H2z" fill="#d3d3d3" />
              <path d="M12 7H5m3-3L5 7l3 3M18 21h7m-3-3l3 3-3 3" stroke="#d3d3d3" strokeWidth="1.800" fill="none" />
            </svg>
          </StatusIcon>
          <StatusIcon $ml={27}><FaDocker size={36} color={dark} /></StatusIcon>
          <StatusIcon $ml={22}>
            <svg width="38" height="34" viewBox="0 0 38 34">
              <path d="M27 5l9 5q2 1 1 3L23 32q-1 2-3 1l-6-4z" fill={dark} />
              <path d="M30 10L17 29" stroke="#d3d3d3" strokeWidth="1.500" />
              <path d="M1 15L19 1q2-1 4 0l3 7q1 3-1 5L13 26q-2 2-4 1l-8-7q-2-2 0-5z" fill={dark} stroke="#d3d3d3" strokeWidth="1" />
              <circle cx="12.500" cy="13.500" r="3.200" fill="none" stroke="#d3d3d3" strokeWidth="2" /><path d="M11 16l-4 4M13 10l-4 0" stroke="#d3d3d3" strokeWidth="2" /><circle cx="20.500" cy="6" r="1.500" fill="#d3d3d3" />
            </svg>
          </StatusIcon>
          <StatusIcon $ml={25}>
            <svg width="32" height="38" viewBox="0 0 32 38">
              <Grad id="shield" a="#3f9020" b="#058423" />
              <path d="M0 4q10 0 16-4 6 4 16 4v14q0 14-16 20Q0 32 0 18z" fill="url(#shield)" />
              <path d="M0 18h9l4 11 5-25 4 16 3-3h7" fill="none" stroke="#000" strokeWidth="2.600" />
            </svg>
          </StatusIcon>
          <StatusIcon $ml={26}>
            <svg width="36" height="36" viewBox="0 0 36 36">
              <path d="M0 0h20l16 17v19H20l-2-6-18-8z" fill={dark} />
              <path d="M4 18V6h2l12-2v14h14v14H21L16 17q-6-3-12 1z" fill="#d3d3d3" />
              <path d="M0 36V17h12l12 19z" fill="#d3d3d3" />
              <circle cx="10" cy="26" r="10" fill={dark} /><path d="M17 26.500H10.500V35" fill="none" stroke="#d3d3d3" strokeWidth="2.200" />
              <path d="M17 36q0-3 4-5l2 5z" fill={dark} />
            </svg>
          </StatusIcon>
          <StatusIcon $ml={21}>
            <svg width="40" height="29" viewBox="0 0 40 29">
              <path d="M0 7q20-14 40 0L20 29z" fill="#ababab" />
              <path d="M25 17q-3 5-9 2-5-3-3-7 3-5 9-3 3 1 4 4M15 18q-7 1-10-4-2-6 4-9 7-3 13 1M18 12q3-4 9-3 8 2 8 8-1 6-8 6-6 0-12-4" fill="none" stroke={dark} strokeWidth="2.500" strokeLinecap="round" />
            </svg>
          </StatusIcon>
          <StatusIcon $ml={25}>
            <svg width="36" height="28" viewBox="0 0 36 28"><path d="M9 19H1V1h34v18h-8" fill="none" stroke={dark} strokeWidth="2" /><path d="M18 14l11 14H7z" fill={dark} /></svg>
          </StatusIcon>
          <StatusText $ml={26} $w={70} $size={23.5} $ls={-0.6}>100%</StatusText>
          <svg width="45" height="24" viewBox="0 0 45 24">
            <rect x="1.200" y="1.200" width="38.600" height="21.600" rx="4.500" fill="none" stroke={dark} strokeWidth="2.400" />
            <path d="M4 6q0-2 2-2h15L10 14h9l-3 6H6q-2 0-2-2zM37 18q0 2-2 2H20l11-10h-9l3-6h10q2 0 2 2z" fill={dark} />
            <path d="M26 1L13 13h8l-4 10 13-13h-8z" fill={dark} stroke="#d3d3d3" strokeWidth="1.500" />
            <path d="M42 7v10q3-1 3-5t-3-5z" fill={dark} />
          </svg>
          <StatusIcon $ml={31}><FlagUS w={32} h={22} /></StatusIcon>
          <StatusText $ml={9} $w={82} $size={22.5} $ls={-0.3}>U.S.</StatusText>
          <StatusText $ml={0} $w={214} $size={28} $ls={-0.4}>Thu 4:56 PM</StatusText>
          <svg width="28" height="28" viewBox="0 0 28 28" fill="none" stroke={dark} strokeWidth="2.400"><circle cx="11" cy="11" r="9.500" /><path d="M18 18l9 9" strokeWidth="3.200" /></svg>
          <StatusIcon $ml={31}>
            <svg width="36" height="21" viewBox="0 0 36 21" stroke={dark} strokeWidth="3"><path d="M0 1.500h3M7 1.500h29M0 10.500h3M7 10.500h22M0 19.500h3M7 19.500h29" /></svg>
          </StatusIcon>
        </StatusGroup>
      </MenuBar>

      <Window>
        <TabStrip>
          <Lights>
            <Light $c="#fd5f57" $b="#e14a43" />
            <Light $c="#fdbd41" $b="#dfa031" />
            <Light $c="#34c84a" $b="#27aa35" />
          </Lights>
          {TABS.map(([t, icon], i) => <Tab key={i} title={t} icon={icon} index={i} />)}
          <NewTab width="66" height="31" viewBox="0 0 66 31"><path d="M4 .7h46q3 0 4 2l11 25q1 2.600-2 2.600H16q-3 0-4-2L1 3.300Q.5.700 4 .7z" fill="#cfcfcf" stroke="#989898" strokeWidth="1.300" /></NewTab>
          <Profile>Dickson</Profile>
        </TabStrip>
        <Toolbar>
          <NavIcons>
            <svg width="28" height="28" viewBox="0 0 28 28" fill="none" stroke="#5f5f5f" strokeWidth="2.700"><path d="M27 14H3M14 2L2 14l12 12" /></svg>
            <svg width="28" height="28" viewBox="0 0 28 28" fill="none" stroke="#d2d2d2" strokeWidth="2.700"><path d="M1 14h24M14 2l12 12-12 12" /></svg>
            <svg width="28" height="28" viewBox="0 0 28 28" fill="none" stroke="#5f5f5f" strokeWidth="2.700"><path d="M25 18.500A11.500 11.500 0 1 1 23.500 6.500" /><path d="M28 1v11H17z" fill="#5f5f5f" stroke="none" /></svg>
            <svg width="28" height="28" viewBox="0 0 28 28" fill="none" stroke="#5f5f5f" strokeWidth="2.700"><path d="M14 2L2.500 14.500H6V26h16V14.500h3.500z" /></svg>
          </NavIcons>
          <Omnibox>
            <svg width="27" height="27" viewBox="0 0 27 27"><circle cx="13.500" cy="13.500" r="12" fill="none" stroke="#5a5a5a" strokeWidth="2.400" /><path d="M12.200 12h2.600v8h-2.600zM12.200 7h2.600v2.800h-2.600z" fill="#5a5a5a" /></svg>
            <Url><b>jenkins.dsyue.com</b>/job/aws-voting-app/configure</Url>
            <svg width="30" height="29" viewBox="0 0 30 29"><path d="M15 2.500l3.200 8.500 9 .4-7 5.700 2.400 8.800L15 21l-7.600 4.900 2.400-8.800-7-5.700 9-.4z" fill="none" stroke="#5f5f5f" strokeWidth="2.400" /></svg>
          </Omnibox>
          <Extensions>
            <QR />
            <FaEvernote size={34} style={{ margin: "0 -1px" }} color="#4b5759" />
            <PassExt />
            <Digger />
            <Dish />
            <Dots3 />
            <Film />
            <FlagUS w={32} h={32} soft />
            <svg width="32" height="32" viewBox="0 0 32 32"><circle cx="16" cy="16" r="12" fill="#fff" stroke="#000" strokeWidth="8" /></svg>
            <svg width="32" height="32" viewBox="0 0 32 32" fill="#5a5a5a"><circle cx="16" cy="6" r="3.300" /><circle cx="16" cy="16" r="3.300" /><circle cx="16" cy="26" r="3.300" /></svg>
          </Extensions>
        </Toolbar>
        <Banner>
          <svg width="32" height="32" viewBox="0 0 32 32"><rect width="32" height="32" rx="4" fill="#fff" /><g fill="#3acc74"><circle cx="6" cy="16" r="2.800" /><circle cx="14" cy="16" r="2.800" /><circle cx="22" cy="16" r="2.800" /><path d="M27.500 11h1.500v10h-1.500z" /></g></svg>
          <BannerText>LastPass detected a password change for domain: dsyue.com</BannerText>
          <BannerButton $w={150}>Confirm</BannerButton>
          <BannerButton $w={240}>Save New Site</BannerButton>
          <svg width="28" height="30" viewBox="0 0 28 30"><path d="M-2 1l28 28M26 1L-2 29" stroke="#fff" strokeWidth="4.500" /></svg>
        </Banner>
        <Page>
          <Config>
            <ConfigTabs>
              {["General", "Source Code Management", "Build Triggers", "Build Environment", "Build", "Post-build Actions"].map((t) => <ConfigTab key={t} $on={t === "Build"}>{t}</ConfigTab>)}
            </ConfigTabs>
            <Body>
              <DragBar />
              <Step>
                <Registry>
                  <RegistryLabel>Registry credentials</RegistryLabel>
                  <Select>
                    <span>- none -</span>
                    <svg width="12" height="22" viewBox="0 0 12 22"><path d="M6 0l6 9H0zM6 22l6-9H0z" fill="#000" /></svg>
                  </Select>
                  <AddButton>
                    <svg width="29" height="32" viewBox="0 0 29 32">
                      <circle cx="24" cy="7" r="5.500" fill="#f7ef54" /><ellipse cx="15" cy="28" rx="12" ry="1.500" fill="#c4c4c4" />
                      <ellipse cx="7" cy="15" rx="6.500" ry="7.500" fill="#4a7fc0" /><circle cx="5" cy="14" r="2" fill="#35609c" /><path d="M11 11h17v6h-3v3h-4v-2H11z" fill="#4a7fc0" />
                    </svg>
                    Add
                    <Caret width="14" height="8" viewBox="0 0 14 8"><path d="M0 0h14L7 8z" fill="#222" /></Caret>
                  </AddButton>
                </Registry>
                {FIELDS.map((f) => (
                  <Field key={f.label} $short={f.short}>
                    <span>{f.label}</span>
                    {f.input ? (
                      <TextInput>{f.input}</TextInput>
                    ) : (
                      <Check $on={f.checked}>
                        {f.checked && <svg width="20" height="20" viewBox="0 0 20 20"><path d="M4.500 10.500l4 4.500 7-10.500" fill="none" stroke="#fff" strokeWidth="2.600" /></svg>}
                      </Check>
                    )}
                    {f.help && <Help><HelpIcon /></Help>}
                    {f.text && <Description>{f.text}</Description>}
                  </Field>
                ))}
              </Step>
            </Body>
            <SaveBar>
              <Action $primary>Save</Action>
              <Action>Apply</Action>
            </SaveBar>
          </Config>
        </Page>
        <DockShade />
      </Window>

      <DockArea>
        <Dock>
          {DOCK.map(([n, r]) => <DockTile key={n} name={n} running={r} />)}
          <Divider />
          <DockTile name="zip" />
          <DockTile name="miniWindow" />
          <DockTile name="trash" />
        </Dock>
      </DockArea>
    </Desktop>
  );
}
